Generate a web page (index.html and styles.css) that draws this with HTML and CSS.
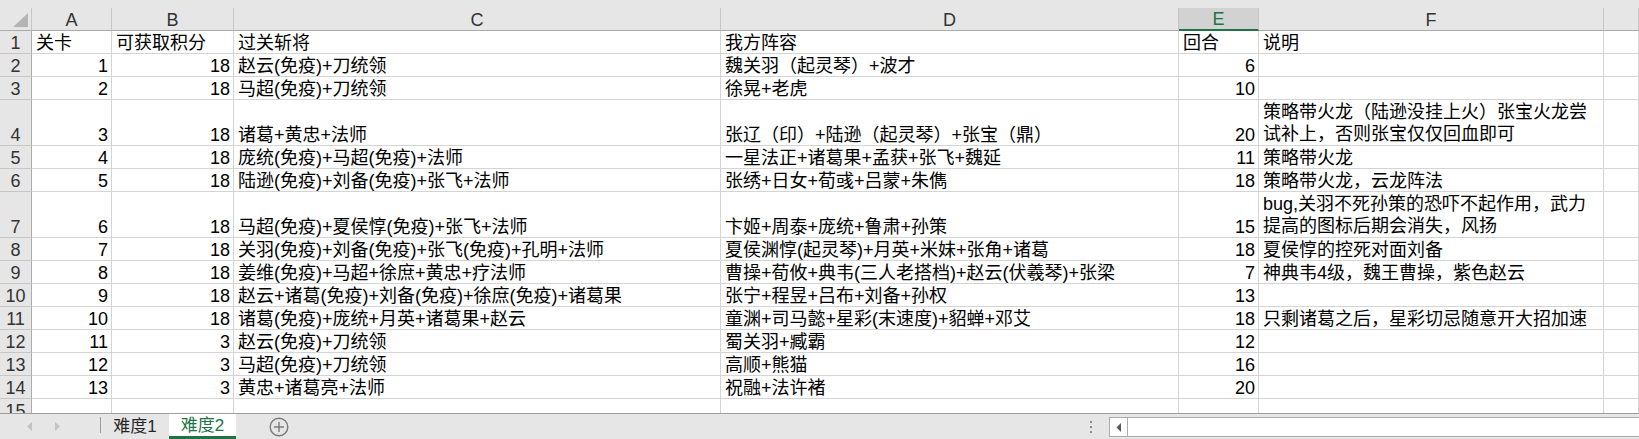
FILE: index.html
```html
<!DOCTYPE html>
<html lang="zh-CN">
<head>
    <meta charset="UTF-8">
    <title>关卡记录</title>
    <link rel="stylesheet" href="styles.css">
</head>
<body>
    <div class="top-strip"></div>
    <div class="sheet">
        <div class="row head">
            <div class="corner"><span class="corner-mark"></span></div>
            <div class="ch">A</div>
            <div class="ch">B</div>
            <div class="ch">C</div>
            <div class="ch">D</div>
            <div class="ch sel">E</div>
            <div class="ch">F</div>
            <div class="ch"></div>
        </div>
        <div class="row">
            <div class="rh">1</div>
            <div class="c">关卡</div>
            <div class="c">可获取积分</div>
            <div class="c">过关斩将</div>
            <div class="c">我方阵容</div>
            <div class="c">回合</div>
            <div class="c">说明</div>
            <div class="c"></div>
        </div>
        <div class="row">
            <div class="rh">2</div>
            <div class="c num">1</div>
            <div class="c num">18</div>
            <div class="c">赵云(免疫)+刀统领</div>
            <div class="c">魏关羽（起灵琴）+波才</div>
            <div class="c num">6</div>
            <div class="c"></div>
            <div class="c"></div>
        </div>
        <div class="row">
            <div class="rh">3</div>
            <div class="c num">2</div>
            <div class="c num">18</div>
            <div class="c">马超(免疫)+刀统领</div>
            <div class="c">徐晃+老虎</div>
            <div class="c num">10</div>
            <div class="c"></div>
            <div class="c"></div>
        </div>
        <div class="row tall">
            <div class="rh">4</div>
            <div class="c num">3</div>
            <div class="c num">18</div>
            <div class="c">诸葛+黄忠+法师</div>
            <div class="c">张辽（印）+陆逊（起灵琴）+张宝（鼎）</div>
            <div class="c num">20</div>
            <div class="c wrap">策略带火龙（陆逊没挂上火）张宝火龙尝<br>试补上，否则张宝仅仅回血即可</div>
            <div class="c"></div>
        </div>
        <div class="row">
            <div class="rh">5</div>
            <div class="c num">4</div>
            <div class="c num">18</div>
            <div class="c">庞统(免疫)+马超(免疫)+法师</div>
            <div class="c">一星法正+诸葛果+孟获+张飞+魏延</div>
            <div class="c num">11</div>
            <div class="c">策略带火龙</div>
            <div class="c"></div>
        </div>
        <div class="row">
            <div class="rh">6</div>
            <div class="c num">5</div>
            <div class="c num">18</div>
            <div class="c">陆逊(免疫)+刘备(免疫)+张飞+法师</div>
            <div class="c">张绣+日女+荀彧+吕蒙+朱儁</div>
            <div class="c num">18</div>
            <div class="c">策略带火龙，云龙阵法</div>
            <div class="c"></div>
        </div>
        <div class="row tall">
            <div class="rh">7</div>
            <div class="c num">6</div>
            <div class="c num">18</div>
            <div class="c">马超(免疫)+夏侯惇(免疫)+张飞+法师</div>
            <div class="c">卞姬+周泰+庞统+鲁肃+孙策</div>
            <div class="c num">15</div>
            <div class="c wrap">bug,关羽不死孙策的恐吓不起作用，武力<br>提高的图标后期会消失，风扬</div>
            <div class="c"></div>
        </div>
        <div class="row">
            <div class="rh">8</div>
            <div class="c num">7</div>
            <div class="c num">18</div>
            <div class="c">关羽(免疫)+刘备(免疫)+张飞(免疫)+孔明+法师</div>
            <div class="c">夏侯渊惇(起灵琴)+月英+米妹+张角+诸葛</div>
            <div class="c num">18</div>
            <div class="c">夏侯惇的控死对面刘备</div>
            <div class="c"></div>
        </div>
        <div class="row">
            <div class="rh">9</div>
            <div class="c num">8</div>
            <div class="c num">18</div>
            <div class="c">姜维(免疫)+马超+徐庶+黄忠+疗法师</div>
            <div class="c">曹操+荀攸+典韦(三人老搭档)+赵云(伏羲琴)+张梁</div>
            <div class="c num">7</div>
            <div class="c">神典韦4级，魏王曹操，紫色赵云</div>
            <div class="c"></div>
        </div>
        <div class="row">
            <div class="rh">10</div>
            <div class="c num">9</div>
            <div class="c num">18</div>
            <div class="c">赵云+诸葛(免疫)+刘备(免疫)+徐庶(免疫)+诸葛果</div>
            <div class="c">张宁+程昱+吕布+刘备+孙权</div>
            <div class="c num">13</div>
            <div class="c"></div>
            <div class="c"></div>
        </div>
        <div class="row">
            <div class="rh">11</div>
            <div class="c num">10</div>
            <div class="c num">18</div>
            <div class="c">诸葛(免疫)+庞统+月英+诸葛果+赵云</div>
            <div class="c">童渊+司马懿+星彩(末速度)+貂蝉+邓艾</div>
            <div class="c num">18</div>
            <div class="c">只剩诸葛之后，星彩切忌随意开大招加速</div>
            <div class="c"></div>
        </div>
        <div class="row">
            <div class="rh">12</div>
            <div class="c num">11</div>
            <div class="c num">3</div>
            <div class="c">赵云(免疫)+刀统领</div>
            <div class="c">蜀关羽+臧霸</div>
            <div class="c num">12</div>
            <div class="c"></div>
            <div class="c"></div>
        </div>
        <div class="row">
            <div class="rh">13</div>
            <div class="c num">12</div>
            <div class="c num">3</div>
            <div class="c">马超(免疫)+刀统领</div>
            <div class="c">高顺+熊猫</div>
            <div class="c num">16</div>
            <div class="c"></div>
            <div class="c"></div>
        </div>
        <div class="row">
            <div class="rh">14</div>
            <div class="c num">13</div>
            <div class="c num">3</div>
            <div class="c">黄忠+诸葛亮+法师</div>
            <div class="c">祝融+法许褚</div>
            <div class="c num">20</div>
            <div class="c"></div>
            <div class="c"></div>
        </div>
        <div class="row">
            <div class="rh">15</div>
            <div class="c"></div>
            <div class="c"></div>
            <div class="c"></div>
            <div class="c"></div>
            <div class="c"></div>
            <div class="c"></div>
            <div class="c"></div>
        </div>
    </div>

    <div class="tabbar">
        <div class="tab-nav">
            <svg width="100" height="25" viewBox="0 0 100 25">
                <polygon points="32,8 32,17 27,12.5" fill="#c3c3c3"/>
                <polygon points="55,8 55,17 60,12.5" fill="#c3c3c3"/>
            </svg>
        </div>
        <div class="tab-sep"></div>
        <div class="tab">难度1</div>
        <div class="tab active">难度2</div>
        <div class="tab-add">
            <svg width="20" height="20" viewBox="0 0 20 20">
                <circle cx="10" cy="10" r="8.8" fill="none" stroke="#7b7b7b" stroke-width="1.4"/>
                <path d="M10 5v10M5 10h10" stroke="#7b7b7b" stroke-width="1.4"/>
            </svg>
        </div>
        <div class="tab-spacer"></div>
        <div class="split-dots"><i></i><i></i><i></i></div>
        <div class="hscroll">
            <div class="hscroll-btn">
                <svg width="6" height="9" viewBox="0 0 6 9"><polygon points="5,0 5,9 0.5,4.5" fill="#5a5a5a"/></svg>
            </div>
            <div class="hscroll-track"></div>
        </div>
    </div>
</body>
</html>
```

FILE: styles.css
```css
html, body {
    margin: 0;
    padding: 0;
    height: 100%;
    overflow: hidden;
}
body {
    font-family: "Liberation Sans", "Noto Sans CJK SC", sans-serif;
    font-size: 18px;
    color: #000;
    background-color: #fff;
}
.top-strip {
    height: 8px;
    background-color: #e6e6e6;
}
/* Grid area */
.sheet {
    height: 405px;
    overflow: hidden;
}
.row {
    display: grid;
    grid-template-columns: 32px 80px 122px 487px 458px 80px 345px 1fr;
    height: 23px;
}
.row.tall {
    height: 46px;
}
.row > div {
    box-sizing: border-box;
    min-width: 0;
}
.c {
    display: flex;
    align-items: flex-end;
    padding: 0 3px 0 4px;
    border-right: 1px solid #d4d4d4;
    border-bottom: 1px solid #d4d4d4;
    line-height: 20px;
    white-space: nowrap;
}
.c.num {
    justify-content: flex-end;
}
.c.wrap {
    line-height: 22px;
}
/* Column and row headers */
.corner {
    display: flex;
    justify-content: flex-end;
    align-items: flex-end;
    padding: 0 3px 3px 0;
    background-color: #e6e6e6;
    border-right: 1px solid #c6c6c6;
    border-bottom: 1px solid #ababab;
}
.corner-mark {
    width: 15px;
    height: 14px;
    background-color: #b4b4b4;
    clip-path: polygon(100% 0, 100% 100%, 0 100%);
}
.ch {
    display: flex;
    justify-content: center;
    align-items: flex-end;
    line-height: 20px;
    color: #333;
    background-color: #e6e6e6;
    border-right: 1px solid #c6c6c6;
    border-bottom: 1px solid #ababab;
}
.ch.sel {
    color: #217346;
    background-color: #d2d2d2;
    border-bottom: 2px solid #217346;
    line-height: 19px;
}
.rh {
    display: flex;
    justify-content: center;
    align-items: flex-end;
    line-height: 20px;
    color: #333;
    background-color: #e6e6e6;
    border-right: 1px solid #ababab;
    border-bottom: 1px solid #c6c6c6;
}
/* Sheet tabs and horizontal scroll */
.tabbar {
    display: flex;
    height: 26px;
    box-sizing: border-box;
    background-color: #e6e6e6;
    border-top: 1px solid #9e9e9e;
    font-size: 17px;
}
.tab-nav {
    width: 100px;
    flex-shrink: 0;
}
.tab-nav svg {
    display: block;
}
.tab-sep {
    width: 1px;
    height: 16px;
    margin-top: 3px;
    background-color: #9e9e9e;
}
.tab {
    width: 68px;
    display: flex;
    justify-content: center;
    align-items: center;
    color: #262626;
    line-height: 20px;
}
.tab.active {
    width: 67px;
    box-sizing: border-box;
    background-color: #fff;
    color: #217346;
    border-bottom: 3px solid #217346;
    padding-top: 2px;
}
.tab-add {
    margin-left: 33px;
    display: flex;
    align-items: center;
}
.tab-add svg {
    display: block;
}
.tab-spacer {
    flex: 1;
}
.split-dots {
    width: 2px;
    margin-right: 17px;
    padding-top: 7px;
    display: flex;
    flex-direction: column;
    gap: 3px;
}
.split-dots i {
    width: 2px;
    height: 2px;
    background-color: #8a8a8a;
}
.hscroll {
    width: 530px;
    flex-shrink: 0;
    height: 20px;
    margin-top: 3px;
    box-sizing: border-box;
    display: flex;
    background-color: #fff;
    border: 1px solid #ababab;
    border-right: none;
}
.hscroll-btn {
    width: 18px;
    box-sizing: border-box;
    border-right: 1px solid #ababab;
    display: flex;
    justify-content: center;
    align-items: center;
}
.hscroll-btn svg {
    display: block;
}
.hscroll-track {
    flex: 1;
}
```
